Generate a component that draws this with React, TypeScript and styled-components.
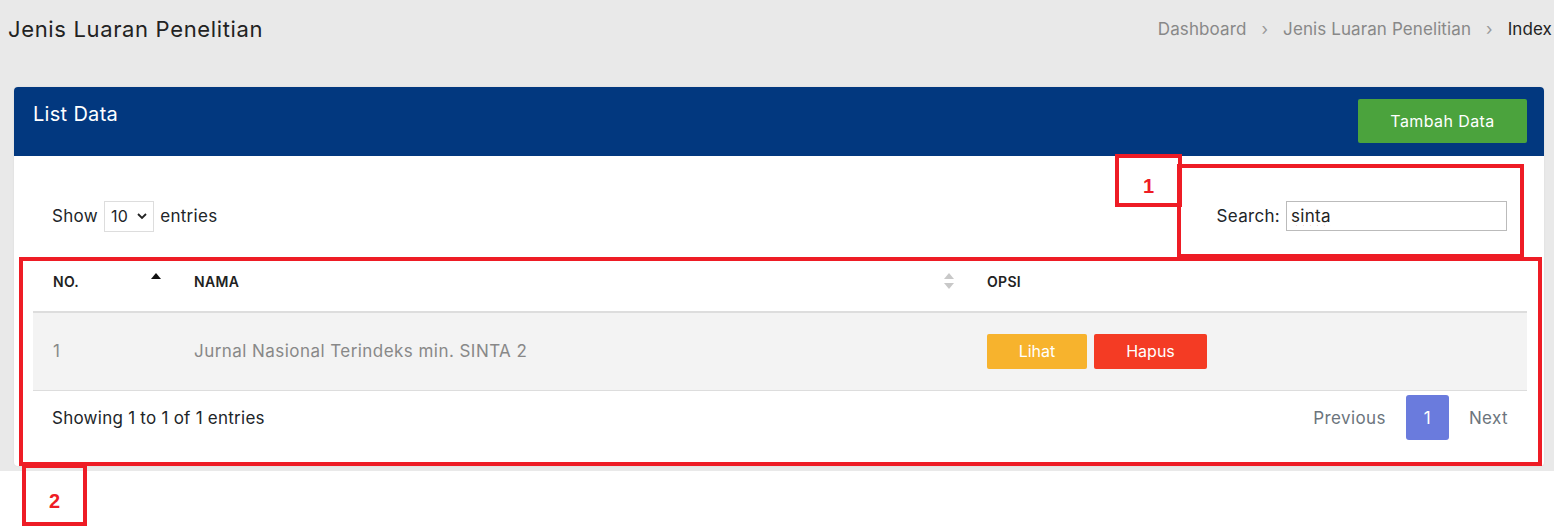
import styled, { createGlobalStyle } from "styled-components";

const GlobalStyle = createGlobalStyle`
  body {
    margin: 0;
    background: #ffffff;
    font-family: Inter, "Noto Sans", sans-serif;
    color: #212529;
  }
  * { box-sizing: border-box; }
`;

const Root = styled.div`
  position: relative;
  width: 1554px;
  height: 532px;
`;

const Page = styled.div`
  background: #e9e9e9;
  padding: 14px 2px 5px 8px;
`;

const TitleRow = styled.div`
  display: flex;
  justify-content: space-between;
  align-items: center;
  height: 30px;
`;

const PageTitle = styled.h1`
  margin: 0;
  font-size: 22px;
  letter-spacing: 0.65px;
  font-weight: 400;
  color: #222;
`;

const Breadcrumb = styled.nav`
  display: flex;
  align-items: center;
  gap: 15px;
  font-size: 17px;
  letter-spacing: 0.1px;
  color: #888;
`;

const Crumb = styled.span<{ active?: boolean }>`
  color: ${(p) => (p.active ? "#222" : "#888")};
`;

const Sep = styled.span`
  font-size: 17px;
  color: #999;
`;

const Card = styled.div`
  margin: 43px 8px 0 6px;
  background: #fff;
  border-radius: 4px;
  overflow: hidden;
  box-shadow: 0 0 2px rgba(0, 0, 0, 0.08);
`;

const CardHeader = styled.div`
  display: flex;
  justify-content: space-between;
  align-items: flex-start;
  height: 69px;
  padding: 12px 17px 0 19px;
  background: #02387f;
`;

const CardTitle = styled.h3`
  margin: 0;
  line-height: 30px;
  font-size: 20px;
  letter-spacing: 0.3px;
  font-weight: 400;
  color: #fff;
`;

const AddButton = styled.button`
  width: 169px;
  height: 44px;
  border: none;
  border-radius: 2px;
  background: #4ba33d;
  color: #fff;
  font-family: inherit;
  font-size: 16px;
  letter-spacing: 0.4px;
`;

const CardBody = styled.div`
  padding: 30px 17px 21px 19px;
`;

const Controls = styled.div`
  display: flex;
  justify-content: space-between;
  align-items: center;
  height: 60px;
  padding: 0 20px 0 19px;
  font-size: 17px;
  letter-spacing: 0.3px;
`;

const Label = styled.label`
  display: flex;
  align-items: center;
  gap: 6px;
`;

const Select = styled.div`
  display: flex;
  align-items: center;
  gap: 9px;
  height: 31px;
  padding: 0 6px 0 6px;
  border: 1px solid #ddd;
  font-size: 16px;
`;

const SearchInput = styled.input`
  width: 221px;
  height: 30px;
  padding: 0 4px;
  border: 1px solid #bbb;
  font-family: inherit;
  font-size: 17px;
  letter-spacing: 0.3px;
  color: #222;
  text-decoration: underline wavy #e33;
  text-decoration-thickness: 1px;
  text-underline-offset: 3px;
  outline: none;
`;

const Table = styled.table`
  width: 100%;
  margin-top: 6px;
  border-collapse: collapse;
`;

const Th = styled.th<{ w?: number }>`
  position: relative;
  width: ${(p) => (p.w ? `${p.w}px` : "auto")};
  height: 60px;
  padding: 0 20px;
  border-bottom: 2px solid #ddd;
  text-align: left;
  font-size: 14px;
  letter-spacing: 0.3px;
  font-weight: 600;
  color: #222;
`;

const SortIcon = styled.svg`
  position: absolute;
  right: 12px;
  top: 20px;
`;

const Tr = styled.tr`
  background: #f3f3f3;
`;

const Td = styled.td`
  height: 78px;
  padding: 0 20px;
  border-bottom: 1px solid #ddd;
  font-size: 17px;
  letter-spacing: 0.45px;
  color: #888;
`;

const Actions = styled.div`
  display: flex;
  gap: 7px;
`;

const ActionButton = styled.button<{ color: string; w: number }>`
  width: ${(p) => p.w}px;
  height: 35px;
  border: none;
  border-radius: 2px;
  background: ${(p) => p.color};
  color: #fff;
  font-family: inherit;
  font-size: 16px;
`;

const Footer = styled.div`
  display: flex;
  justify-content: space-between;
  align-items: center;
  height: 54px;
  padding: 0 19px 0 19px;
  font-size: 17px;
  letter-spacing: 0.25px;
`;

const Pager = styled.div`
  display: flex;
  align-items: center;
  gap: 20px;
`;

const PageLink = styled.span`
  color: #6c757d;
  font-size: 17px;
  letter-spacing: 0.4px;
`;

const PageButton = styled.span`
  display: flex;
  align-items: center;
  justify-content: center;
  width: 43px;
  height: 45px;
  border-radius: 3px;
  background: #6a7bdd;
  color: #fff;
  font-size: 17px;
`;

const Mark = styled.div<{ x: number; y: number; w: number; h: number }>`
  position: absolute;
  left: ${(p) => p.x}px;
  top: ${(p) => p.y}px;
  width: ${(p) => p.w}px;
  height: ${(p) => p.h}px;
  border: 4px solid #ee1c25;
  padding-top: 12px;
  display: flex;
  align-items: center;
  justify-content: center;
  font-family: "Liberation Sans", Arial, sans-serif;
  font-weight: 700;
  font-size: 20px;
  color: #ee1c25;
  pointer-events: none;
`;

function SortArrows({ active }: { active?: boolean }) {
  return (
    <SortIcon width="12" height="18" viewBox="0 0 12 18">
      <polygon points="6,1 11,7 1,7" fill={active ? "#111" : "#c8c8c8"} />
      {!active && <polygon points="1,11 11,11 6,17" fill="#c8c8c8" />}
    </SortIcon>
  );
}

export default function App() {
  return (
    <Root>
      <GlobalStyle />
      <Page>
        <TitleRow>
          <PageTitle>Jenis Luaran Penelitian</PageTitle>
          <Breadcrumb>
            <Crumb>Dashboard</Crumb>
            <Sep>›</Sep>
            <Crumb>Jenis Luaran Penelitian</Crumb>
            <Sep>›</Sep>
            <Crumb active>Index</Crumb>
          </Breadcrumb>
        </TitleRow>
        <Card>
          <CardHeader>
            <CardTitle>List Data</CardTitle>
            <AddButton>Tambah Data</AddButton>
          </CardHeader>
          <CardBody>
            <Controls>
              <Label>
                Show
                <Select>
                  10
                  <svg width="10" height="7" viewBox="0 0 10 7">
                    <polyline points="1,1 5,5 9,1" fill="none" stroke="#222" strokeWidth="1.8" />
                  </svg>
                </Select>
                entries
              </Label>
              <Label>
                Search:
                <SearchInput defaultValue="sinta" spellCheck={false} />
              </Label>
            </Controls>
            <Table>
              <thead>
                <tr>
                  <Th w={141}>
                    NO.
                    <SortArrows active />
                  </Th>
                  <Th w={793}>
                    NAMA
                    <SortArrows />
                  </Th>
                  <Th>OPSI</Th>
                </tr>
              </thead>
              <tbody>
                <Tr>
                  <Td>1</Td>
                  <Td>Jurnal Nasional Terindeks min. SINTA 2</Td>
                  <Td>
                    <Actions>
                      <ActionButton color="#f7b32d" w={100}>Lihat</ActionButton>
                      <ActionButton color="#f43b24" w={113}>Hapus</ActionButton>
                    </Actions>
                  </Td>
                </Tr>
              </tbody>
            </Table>
            <Footer>
              <span>Showing 1 to 1 of 1 entries</span>
              <Pager>
                <PageLink>Previous</PageLink>
                <PageButton>1</PageButton>
                <PageLink>Next</PageLink>
              </Pager>
            </Footer>
          </CardBody>
        </Card>
      </Page>
      <Mark x={1115} y={154} w={67} h={53}>1</Mark>
      <Mark x={1177} y={164} w={347} h={94} />
      <Mark x={19} y={257} w={1523} h={209} />
      <Mark x={22} y={464} w={65} h={62}>2</Mark>
    </Root>
  );
}
